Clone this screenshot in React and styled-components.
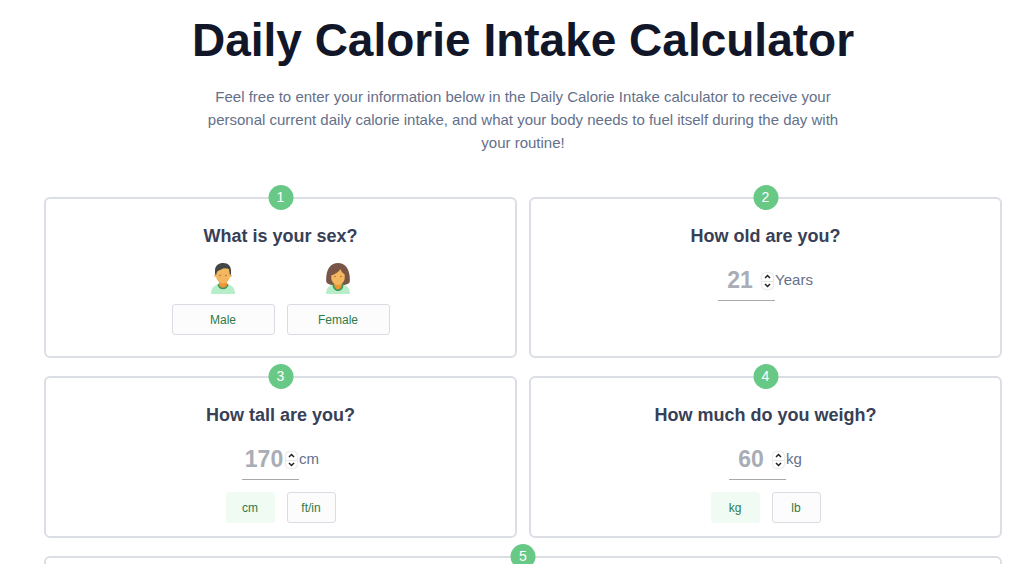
import React, { useState } from 'react';
import styled, { createGlobalStyle } from 'styled-components';

const GlobalStyle = createGlobalStyle`
  * {
    box-sizing: border-box;
  }

  body {
    margin: 0;
    background: #fff;
    color: #64708a;
    font-family: "Liberation Sans", Arial, Helvetica, sans-serif;
  }

  html {
    scrollbar-width: none;
  }
`;

const Page = styled.main`
  padding: 12px 22px 24px 44px;
`;

const Header = styled.header`
  max-width: 680px;
  margin: 0 auto;
  text-align: center;
`;

const Title = styled.h1`
  margin: 0;
  color: #111729;
  font-size: 46px;
  line-height: 56px;
  white-space: nowrap;
`;

const Intro = styled.p`
  margin: 17px 0 0;
  padding: 0 16px;
  font-size: 15px;
  line-height: 23px;
`;

const Grid = styled.div`
  display: grid;
  grid-template-columns: 1fr 1fr;
  gap: 18px 12px;
  margin-top: 43px;
`;

const Card = styled.section`
  position: relative;
  display: flex;
  flex-direction: column;
  align-items: center;
  grid-column: ${props => props.$wide ? '1 / -1' : 'auto'};
  min-height: 161px;
  padding: 25px 12px 13px;
  border: 2px solid #dbdee4;
  border-radius: 6px;
`;

const Badge = styled.span`
  position: absolute;
  top: -14px;
  left: 50%;
  width: 25px;
  height: 25px;
  border-radius: 50%;
  background: #68c987;
  color: #fff;
  font-size: 14px;
  line-height: 25px;
  text-align: center;
  transform: translateX(-50%);
`;

const Question = styled.h2`
  margin: 0;
  color: #374056;
  font-size: 18px;
  line-height: 24px;
`;

const Options = styled.div`
  display: flex;
  gap: 12px;
  margin-top: ${props => props.$spaced ? '14px' : '12px'};
`;

const SexOption = styled.div`
  display: flex;
  flex-direction: column;
  align-items: center;
  gap: 10px;

  svg {
    display: block;
    width: 32px;
    height: 32px;
  }
`;

const OptionButton = styled.button`
  width: ${props => props.$wide ? '103px' : '49px'};
  height: 31px;
  padding: 0;
  border: 1px solid ${props => props.$active ? '#effbf3' : '#d9dce2'};
  border-radius: 3px;
  background: ${props => props.$active ? '#effbf3' : '#fcfcfd'};
  color: #2f7a46;
  font-family: inherit;
  font-size: 12px;
  cursor: pointer;
`;

const Measure = styled.div`
  display: flex;
  align-items: center;
  height: 40px;
  margin-top: 13px;
  font-size: 15px;
`;

const Field = styled.div`
  display: flex;
  align-items: center;
  width: 57px;
  height: 40px;
  border-bottom: 1px solid #a9a9ad;
`;

const Unit = styled.span`
  padding-bottom: 4px;
`;

const NumberInput = styled.input`
  flex: 1;
  min-width: 0;
  padding: 0;
  border: 0;
  outline: none;
  background: transparent;
  color: #374056;
  font-family: inherit;
  font-size: 23px;
  font-weight: bold;
  text-align: center;
  appearance: textfield;

  &::placeholder {
    color: #a8adb6;
    opacity: 1;
  }

  &::-webkit-inner-spin-button {
    appearance: none;
    margin: 0;
  }
`;

const Stepper = styled.div`
  display: flex;
  flex-direction: column;
  width: 11px;
  margin-right: 2px;
  border-radius: 4px;
  box-shadow: 0 0 2px #b8b8b8;
`;

const StepButton = styled.button`
  display: flex;
  align-items: center;
  justify-content: center;
  height: 8px;
  padding: 0;
  border: 0;
  background: transparent;
  color: #222;

  & + & {
    border-top: 1px solid #e6e6e6;
  }

  svg {
    display: block;
    width: 7px;
    height: 5px;
  }
`;

const MaleIcon = () => (
  <svg viewBox="0 0 32 32" aria-hidden="true">
    <path d="M4 32c0-6.500 3.500-9 8.500-10h7c5 1 8.500 3.500 8.500 10z" fill="#b7edc8" />
    <path d="M10.500 22.500 13 21h6l2.500 1.500c-.5 3.200-2.500 4.700-5.500 4.700s-5-1.500-5.500-4.700z" fill="#3f9658" />
    <path d="M12 20h8v3c-1.500 3.600-6.500 3.600-8 0z" fill="#ef9637" />
    <circle cx="8.800" cy="13.500" r="1.500" fill="#f0ac52" />
    <circle cx="23.200" cy="13.500" r="1.500" fill="#f0ac52" />
    <path d="M9 9c0-8 14-8 14 0v5c0 4.500-4 7.500-7 7.500s-7-3-7-7.500z" fill="#f4b75f" />
    <path d="M8 12.500V8.500C8 3.500 11.500 1 16.500 1 21 1 24 4 24 8.500v4h-1.200l-.9-5.500c-3.500-1-5.500-.8-7.700.4-2.200 1.100-4.600 1-4.800 5.100z" fill="#424746" />
    <circle cx="13" cy="13.500" r=".7" fill="#8c6236" />
    <circle cx="19" cy="13.500" r=".7" fill="#8c6236" />
  </svg>
);

const FemaleIcon = () => (
  <svg viewBox="0 0 32 32" aria-hidden="true">
    <path d="M16 1C9 1 5.500 6 4.500 13c-.5 3.500-.5 6 0 7.500C6 22.700 9.300 23 11.900 23h8.200c2.600 0 5.900-.3 7.400-2.500.5-1.500.5-4 0-7.500C26.500 6 23 1 16 1z" fill="#795548" />
    <path d="M4 32c0-6 3-8.500 7.500-9.500h9c4.500 1 7.500 3.500 7.500 9.500z" fill="#b7edc8" />
    <path d="M10.500 22.500 12.500 21h7l2 1.500c0 4-2.500 6.500-5.500 6.500s-5.500-2.500-5.500-6.500z" fill="#3f9658" />
    <path d="M12.200 20h7.600v3c-.5 3-2.300 4.500-3.800 4.500s-3.300-1.500-3.800-4.500z" fill="#ef9637" />
    <path d="M9.300 13.500c4.200-1.200 7.700-3.700 9.200-6.500.7 2.500 2.200 4 4.200 5.500v3.500c0 4.200-3.700 7-6.700 7s-6.700-2.800-6.700-7z" fill="#f4b75f" />
    <circle cx="13" cy="14.500" r=".7" fill="#8c6236" />
    <circle cx="19" cy="14.500" r=".7" fill="#8c6236" />
  </svg>
);

const Chevron = ({ up }) => (
  <svg viewBox="0 0 7 5" fill="none" stroke="currentColor" strokeWidth="1.500" aria-hidden="true">
    <path d={up ? 'M1 4l2.500-2.500L6 4' : 'M1 1l2.500 2.500L6 1'} />
  </svg>
);

const NumberField = ({ label, placeholder, unit }) => {
  const [value, setValue] = useState('');

  const step = (amount) => {
    setValue(String(Math.max(0, Number(value || placeholder) + amount)));
  };

  return (
    <Measure>
      <Field>
        <NumberInput
          type="number"
          aria-label={label}
          placeholder={placeholder}
          value={value}
          onChange={(e) => setValue(e.target.value)}
        />
        <Stepper>
          <StepButton type="button" aria-label="Increase" onClick={() => step(1)}>
            <Chevron up />
          </StepButton>
          <StepButton type="button" aria-label="Decrease" onClick={() => step(-1)}>
            <Chevron />
          </StepButton>
        </Stepper>
      </Field>
      <Unit>{unit}</Unit>
    </Measure>
  );
};

const UnitPicker = ({ units, value, onChange }) => (
  <Options>
    {units.map((unit) => (
      <OptionButton
        key={unit}
        type="button"
        $active={unit === value}
        aria-pressed={unit === value}
        onClick={() => onChange(unit)}
      >
        {unit}
      </OptionButton>
    ))}
  </Options>
);

const App = () => {
  const [sex, setSex] = useState('');
  const [heightUnit, setHeightUnit] = useState('cm');
  const [weightUnit, setWeightUnit] = useState('kg');

  return (
    <>
      <GlobalStyle />
      <Page>
        <Header>
          <Title>Daily Calorie Intake Calculator</Title>
          <Intro>
            Feel free to enter your information below in the Daily Calorie Intake calculator to
            receive your personal current daily calorie intake, and what your body needs to fuel
            itself during the day with your routine!
          </Intro>
        </Header>

        <Grid>
          <Card>
            <Badge>1</Badge>
            <Question>What is your sex?</Question>
            <Options $spaced>
              <SexOption>
                <MaleIcon />
                <OptionButton type="button" $wide $active={sex === 'male'} onClick={() => setSex('male')}>
                  Male
                </OptionButton>
              </SexOption>
              <SexOption>
                <FemaleIcon />
                <OptionButton type="button" $wide $active={sex === 'female'} onClick={() => setSex('female')}>
                  Female
                </OptionButton>
              </SexOption>
            </Options>
          </Card>

          <Card>
            <Badge>2</Badge>
            <Question>How old are you?</Question>
            <NumberField label="Age" placeholder="21" unit="Years" />
          </Card>

          <Card>
            <Badge>3</Badge>
            <Question>How tall are you?</Question>
            <NumberField label="Height" placeholder="170" unit={heightUnit} />
            <UnitPicker units={['cm', 'ft/in']} value={heightUnit} onChange={setHeightUnit} />
          </Card>

          <Card>
            <Badge>4</Badge>
            <Question>How much do you weigh?</Question>
            <NumberField label="Weight" placeholder="60" unit={weightUnit} />
            <UnitPicker units={['kg', 'lb']} value={weightUnit} onChange={setWeightUnit} />
          </Card>

          <Card $wide>
            <Badge>5</Badge>
          </Card>
        </Grid>
      </Page>
    </>
  );
};

export default App;
